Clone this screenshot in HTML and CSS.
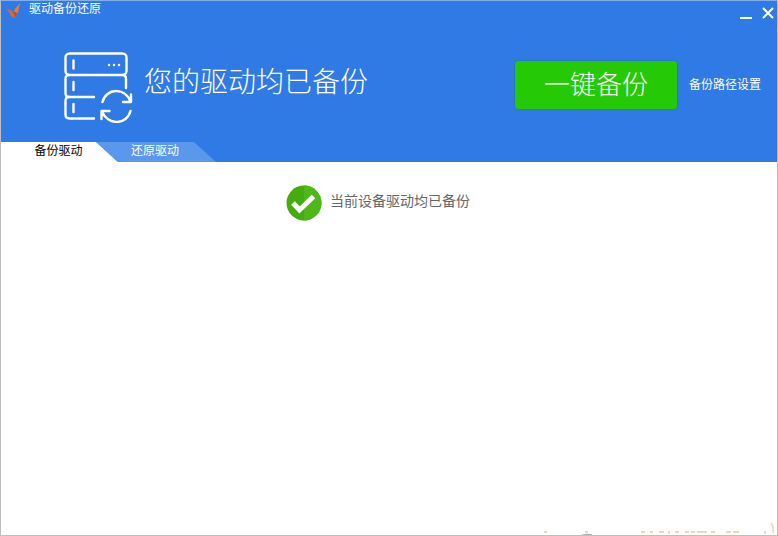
FILE: index.html
```html
<!DOCTYPE html>
<html lang="zh-CN">
<head>
  <meta charset="UTF-8" />
  <meta name="viewport" content="width=device-width, initial-scale=1.0" />
  <title>驱动备份还原</title>
  <link rel="stylesheet" href="styles.css">
</head>
<body>
  <div class="window">
    <header class="header">
      <div class="title-bar">
        <svg class="logo" width="16" height="16" viewBox="0 0 16 16" aria-hidden="true">
          <path d="M0 6l5 1 4 6-1 2-3-2-2-4z" fill="#d8663c"/>
          <path d="M14 0l-2 9-3 6-2-3 2-6z" fill="#f07a2c"/>
          <path d="M7 9l2 6 2-4-1-2z" fill="#b5502c"/>
        </svg>
        <h1 class="title">驱动备份还原</h1>
        <div class="window-buttons">
          <button type="button" class="win-btn" aria-label="最小化">
            <svg width="12" height="12" viewBox="0 0 12 12"><path d="M0 11h12" stroke="#fff" stroke-width="2"/></svg>
          </button>
          <button type="button" class="win-btn" aria-label="关闭">
            <svg width="12" height="12" viewBox="0 0 12 12"><path d="M1 1l10 10M11 1L1 11" stroke="#fff" stroke-width="2"/></svg>
          </button>
        </div>
      </div>

      <div class="banner">
        <svg class="server-icon" width="70" height="72" viewBox="0 0 70 72" fill="none" stroke="#fff" stroke-width="2.4" stroke-linecap="round" stroke-linejoin="round" aria-hidden="true">
          <rect x="2.5" y="2.5" width="61" height="21.5" rx="4"/>
          <path d="M6 24q-3.500 0-3.500 4v14q0 4 3.500 4h25M60 24q3 0 3 4v9"/>
          <path d="M6 46q-3.500 0-3.500 4v13.500q0 4 4 4h24.500"/>
          <path d="M10.500 9.500v8M10.500 31v8M10.500 53v8"/>
          <path d="M46 14h.1M51 14h.1M56 14h.1"/>
          <path d="M39.500 51C43 37 62 36 67.500 50.500M68 43.500v7.500h-8"/>
          <path d="M67.500 60C64 74 45 75 39 60.500M38.500 68v-8h8"/>
        </svg>
        <p class="headline">您的驱动均已备份</p>
        <button type="button" class="backup-btn">一键备份</button>
        <a href="#" class="path-link">备份路径设置</a>
      </div>

      <nav class="tabs">
        <button type="button" class="tab active">备份驱动</button>
        <button type="button" class="tab">还原驱动</button>
      </nav>
    </header>

    <main class="content">
      <div class="status">
        <svg width="36" height="36" viewBox="0 0 36 36" aria-hidden="true">
          <circle cx="18" cy="18" r="17.500" fill="#44ac0c"/>
          <path d="M18 .5a17.500 17.500 0 0 1 0 35z" fill="#4db818"/>
          <path d="M7 18l6.500 7L27.500 11.500" fill="none" stroke="#fff" stroke-width="5"/>
        </svg>
        <span>当前设备驱动均已备份</span>
      </div>
    </main>

    <svg class="trace" width="236" height="14" viewBox="0 0 236 14" aria-hidden="true">
      <path d="M3 11h3M44 11h3M100 11h4M109 11h3M118 11h5M128 10v3M134 11h4M144 11h4M150 11h4M156 11h10M170 11h4M185 11h5M192 11h6M224 10v3" fill="none" stroke="#f6d3b5" stroke-width="2"/>
      <path d="M230 2q3 3 2 10" fill="none" stroke="#f8d9bd" stroke-width="2"/>
      <path d="M40 14q5-2 11-1v1z" fill="#b0b0b0"/>
    </svg>
  </div>
</body>
</html>
```
FILE: styles.css
```css
:root {
  --primary: #2f7ae5;
  --tab: #5b97ec;
  --green: #26c906;
  --border: #bebebe;
}

* { box-sizing: border-box; }
body {
  margin: 0;
  font-family: "Liberation Sans", "Noto Sans CJK SC", sans-serif;
  font-size: 12px;
  line-height: 16px;
  background: #fff;
  color: #000;
}
button {
  padding: 0;
  border: none;
  background: none;
  font: inherit;
  color: inherit;
  cursor: pointer;
}

.window {
  position: relative;
  display: flex;
  flex-direction: column;
  min-height: 100vh;
  border: 1px solid var(--border);
  border-top-color: #82afed;
}
.header { background: var(--primary); color: #fff; }

.title-bar {
  display: flex;
  align-items: flex-start;
  height: 24px;
  padding: 0 3px 0 5px;
}
.logo { margin-top: 2px; }
.title { margin: 0 0 0 7px; font-size: 12px; font-weight: 400; }
.window-buttons { display: flex; gap: 10px; margin: 6px 0 0 auto; }
.win-btn { display: flex; }

.banner {
  display: flex;
  align-items: center;
  height: 117px;
  padding: 2px 16px 0 62px;
}
.server-icon { margin-top: 4px; }
.headline {
  margin: 0 auto 4px 11px;
  font-size: 28px;
  font-weight: 300;
  line-height: 40px;
}
.backup-btn {
  width: 162px;
  height: 48px;
  margin-right: 12px;
  border-radius: 3px;
  background: var(--green);
  box-shadow: 0 0 2px #1c7a5c;
  font-size: 26px;
  font-weight: 300;
}
.path-link { color: #fff; text-decoration: none; }

.tabs { display: flex; height: 20px; }
.tab {
  width: 120px;
  margin-left: -22px;
  padding: 0 2px 2px 0;
  background: var(--tab);
  clip-path: polygon(0 0, 98px 0, 100% 100%, 22px 100%);
}
.tab.active {
  width: 117px;
  margin-left: 0;
  background: #fff;
  color: #000;
  clip-path: polygon(0 0, 95px 0, 100% 100%, 0 100%);
}

.content { flex: 1; padding-top: 23px; }
.status {
  display: flex;
  justify-content: center;
  gap: 8px;
  padding-right: 22px;
  color: #666;
  font-size: 14px;
  line-height: 32px;
}

.trace { position: absolute; right: 0; bottom: 0; }
```
